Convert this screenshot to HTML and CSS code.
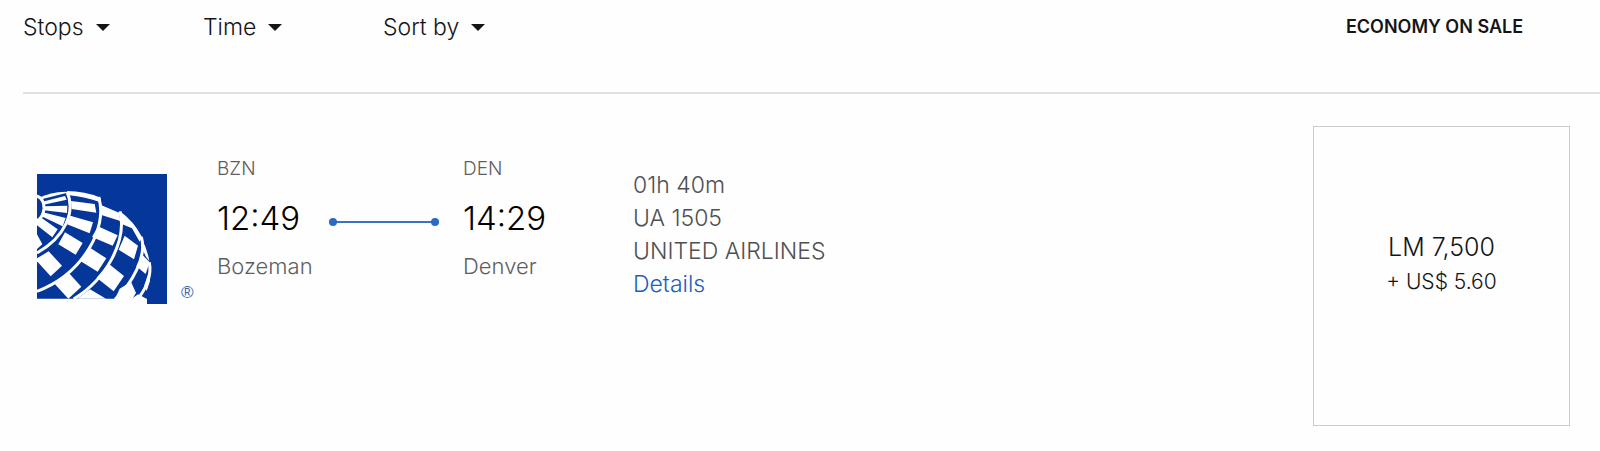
FILE: index.html
```
<!DOCTYPE html>
<html lang="en">
<head>
<meta charset="utf-8">
<title>Flight results</title>
<link rel="stylesheet" href="styles.css">
</head>
<body>
<main class="results">
  <header class="toolbar">
    <div class="filters">
      <button class="filter" type="button">Stops<span class="caret"></span></button>
      <button class="filter" type="button">Time<span class="caret"></span></button>
      <button class="filter" type="button">Sort by<span class="caret"></span></button>
    </div>
    <h2 class="fare-heading">ECONOMY ON SALE</h2>
  </header>
  <article class="flight">
    <div class="carrier">
      <svg class="logo" viewBox="22 27 390 390" role="img" aria-label="United Airlines">
        <path fill="#05369a" d="M22 27H412V417H350V401H22Z"/>
        <g fill="#fff">
          <path d="M32 97Q60 82 108 80L110 84L38 102Z"/>
          <path d="M38 110L106 93L111 104L42 119Z"/>
          <path d="M44 124L113 122L112 144L43 136Z"/>
          <path d="M40 142L108 159L99 184L34 153Z"/>
          <path d="M33 157L84 193L68 217L22 181V162Z"/>
          <path d="M22 208L38 238L22 252Z"/>
          <path d="M112 78Q165 78 213 98L213 112Q165 96 119 91Z"/>
          <path d="M124 108L195 117L200 143L126 132Z"/>
          <path d="M122 152L190 172L180 205L112 178Z"/>
          <path d="M106 202L159 234L138 269L86 238Z"/>
          <path d="M57 259L97 302L63 334L22 289V280Z"/>
          <path d="M212 119L268 143L272 168L215 150Z"/>
          <path d="M205 184L264 211L249 242L187 216Z"/>
          <path d="M182 249L230 280L204 320L152 288Z"/>
          <path d="M117 323L155 365L116 401L76 358Z"/>
          <path d="M270 138Q312 168 337 216L330 230L307 190L276 177Z"/>
          <path d="M285 212L325 242L313 283L267 254Z"/>
          <path d="M237 296L283 333L252 379L201 338Z"/>
          <path d="M181 373L229 401H142Z"/>
          <path d="M335 220Q352 248 359 288L349 275L336 249Z"/>
          <path d="M338 269L360 292L348 327L320 304Z"/>
          <path d="M304 350L319 384L308 402H256L270 371Z"/>
          <path d="M361 310V348L351 378L344 361Z"/>
          <path d="M325 388L352 402V417H306V401Z"/>
        </g>
        <g fill="none" stroke="#fff" stroke-width="9">
          <path d="M22 93Q44 102 43 131Q40 157 22 168"/>
          <path d="M112 80C139 141 105 218 22 264"/>
          <path d="M207 96C236 190 159 327 22 379"/>
          <path d="M271 139C292 226 233 341 132 402"/>
          <path d="M335 216C353 276 305 358 256 403"/>
          <path d="M359 292C369 342 338 386 318 410"/>
        </g>
      </svg>
      <span class="registered">®</span>
    </div>
    <div class="route">
      <div class="stop"><span class="code">BZN</span><time class="time">12:49</time><span class="city">Bozeman</span></div>
      <div class="leg"></div>
      <div class="stop"><span class="code">DEN</span><time class="time">14:29</time><span class="city">Denver</span></div>
    </div>
    <div class="info">
      <span>01h 40m</span>
      <span>UA 1505</span>
      <span>UNITED AIRLINES</span>
      <a class="details" href="#">Details</a>
    </div>
    <button class="fare" type="button">
      <span class="points">LM 7,500</span>
      <span class="taxes">+ US$ 5.60</span>
    </button>
  </article>
</main>
</body>
</html>
```
FILE: styles.css
```
* { box-sizing: border-box; }
body {
  margin: 0;
  background: #fefefe;
  color: #151517;
  font-family: Inter, "Liberation Sans", sans-serif;
  font-weight: 300;
}
button { font: inherit; color: inherit; background: none; }
.results { padding-left: 23px; }
.toolbar {
  display: flex;
  justify-content: space-between;
  height: 94px;
  padding: 13px 30px 0 0;
  border-bottom: 2px solid #e1e1e2;
}
.filters { display: grid; grid-template-columns: repeat(3, 180px); align-items: start; }
.filter {
  display: flex;
  align-items: center;
  gap: 12px;
  padding: 0;
  border: 0;
  font-size: 23px;
  line-height: 28px;
}
.caret {
  border: 7px solid transparent;
  border-top-color: #151517;
  border-bottom: 0;
}
.fare-heading {
  width: 257px;
  margin: 0;
  padding-right: 14px;
  font-size: 18px;
  font-weight: 600;
  line-height: 28px;
  text-align: center;
}
.flight {
  display: flex;
  align-items: flex-start;
  padding: 32px 30px 24px 14px;
}
.carrier { display: flex; align-items: flex-end; gap: 14px; width: 180px; padding-top: 48px; }
.logo { width: 130px; height: 130px; }
.registered { color: #3a60ae; font-size: 17px; line-height: 22px; font-family: "Liberation Sans", sans-serif; }
.route { display: flex; padding-top: 31px; }
.stop { display: flex; flex-direction: column; width: 112px; color: #5e5e62; }
.code { font-size: 19px; line-height: 24px; }
.time { margin: 20px 0 17px; color: #000; font-size: 33px; line-height: 34px; }
.city { font-size: 22px; line-height: 28px; }
.leg {
  position: relative;
  width: 110px;
  height: 2px;
  margin: 64px 24px 0 0;
  background: #3a72c8;
}
.leg::before, .leg::after {
  content: "";
  position: absolute;
  top: -3px;
  width: 8px;
  height: 8px;
  border-radius: 50%;
  background: #2c68c4;
}
.leg::before { left: 0; }
.leg::after { right: 0; }
.info {
  display: flex;
  flex-direction: column;
  align-items: flex-start;
  padding: 43px 0 0 58px;
  color: #505054;
  font-size: 23px;
  line-height: 33px;
}
.details { color: #1c60bd; text-decoration: none; }
.fare {
  display: flex;
  flex-direction: column;
  align-items: center;
  width: 257px;
  margin-left: auto;
  padding: 102px 0 126px;
  border: 1px solid #cbcbcd;
}
.points { font-size: 25px; line-height: 36px; }
.taxes { font-size: 21px; line-height: 34px; }
```
